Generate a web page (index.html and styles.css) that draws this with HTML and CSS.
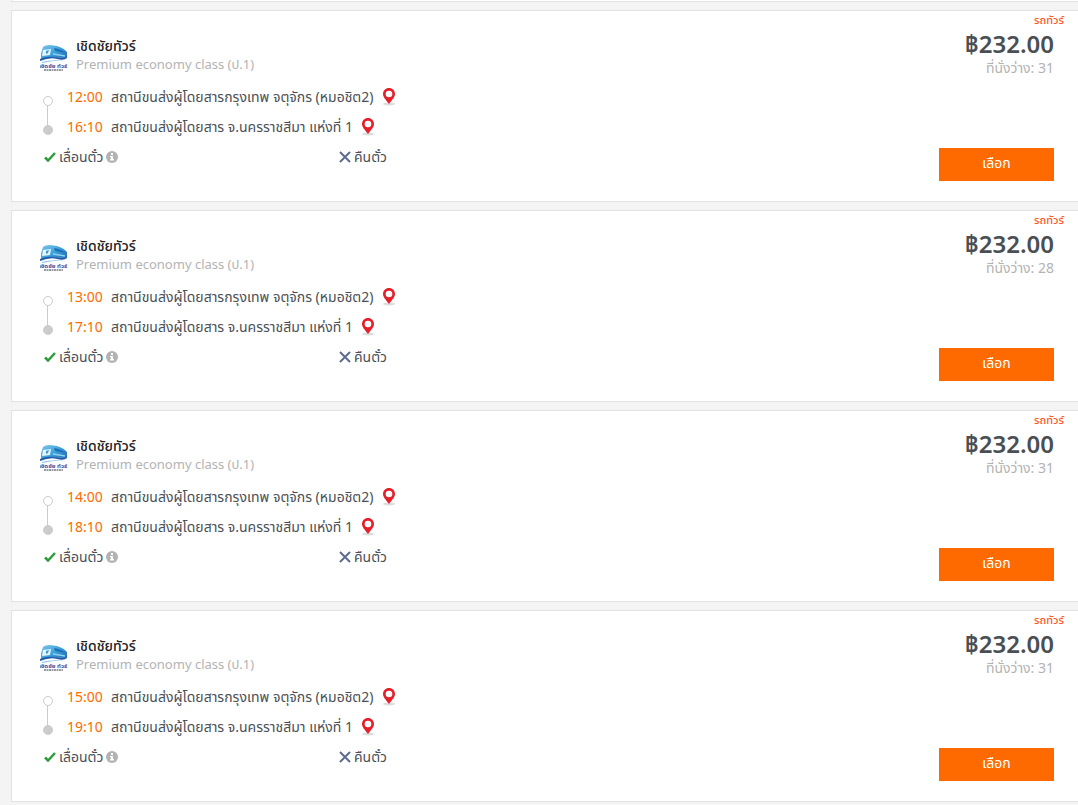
FILE: index.html
```html
<!DOCTYPE html>
<html lang="th">
<head>
<meta charset="utf-8">
<meta name="viewport" content="width=device-width, initial-scale=1">
<title>รถทัวร์</title>
<link rel="stylesheet" href="styles.css">
</head>
<body>
<svg class="defs" aria-hidden="true">
  <defs>
    <linearGradient id="busBlue" x1="0" y1="0" x2="1" y2="1">
      <stop offset="0" stop-color="#7cc6ea"/>
      <stop offset=".5" stop-color="#3fa3dc"/>
      <stop offset="1" stop-color="#1c62ad"/>
    </linearGradient>
    <symbol id="logo" viewBox="0 0 28 28">
      <path d="M3 2Q5 0 10 0L17 1Q24 3 27 7L27 13Q14 12 1 14L1 8z" fill="url(#busBlue)"/>
      <path d="M3 5L11 4L10 10L2 11z" fill="#e6f5fc"/>
      <path d="M6 6L9 5L8 8L6 9z" fill="#3f97d3"/>
      <path d="M14 3Q21 4 26 8L15 6z" fill="#1d6fb8"/>
      <path d="M13 9L25 11" stroke="#8fd2f0" stroke-width="1.500"/>
      <path d="M0 14Q7 11 13 12T27 13Q24 16 17 14T0 16z" fill="#2159a8"/>
      <path d="M2 17Q14 14 25 16Q14 15 2 18z" fill="#74bde6"/>
      <text x="13" y="23" text-anchor="middle" class="logo-name">เชิดชัย ทัวร์</text>
      <path d="M4 25H23" stroke="#77798c" stroke-width="1.4" stroke-dasharray="2 .5"/>
    </symbol>
    <symbol id="pin" viewBox="0 0 12 18">
      <ellipse cx="6" cy="16" rx="6" ry="1.5" fill="#dcdcdc"/>
      <path fill-rule="evenodd" d="M6 0C2.6 0 0 2.6 0 6C0 9 3 12 6 16C9 12 12 9 12 6C12 2.600 9.400 0 6 0zM6 2.700A3.300 3.300 0 1 1 6 9.300A3.300 3.300 0 1 1 6 2.700z" fill="#e5202b"/>
    </symbol>
    <symbol id="check" viewBox="0 0 12 10">
      <path d="M1 5.500L4 8.500L11 1" fill="none" stroke="#2a9d3c" stroke-width="2.500"/>
    </symbol>
    <symbol id="cross" viewBox="0 0 12 12">
      <path d="M1 1L11 11M11 1L1 11" fill="none" stroke="#5b6c8c" stroke-width="2"/>
    </symbol>
    <symbol id="info" viewBox="0 0 12 12">
      <circle cx="6" cy="6" r="6" fill="#b3b3b3"/>
      <path d="M5 2H7V4H5zM4 5H7V8H8V9.500H4V8H5V6.500H4z" fill="#fff"/>
    </symbol>
  </defs>
</svg>

<main class="trips">
  <div class="trip-end"></div>

  <article class="trip">
    <div class="info">
      <header class="operator">
        <svg class="logo" role="img" aria-label="เชิดชัยทัวร์"><use href="#logo"/></svg>
        <div>
          <h2>เชิดชัยทัวร์</h2>
          <p>Premium economy class (ป.1)</p>
        </div>
      </header>
      <ul class="route">
        <li><time>12:00</time><span>สถานีขนส่งผู้โดยสารกรุงเทพ จตุจักร (หมอชิต2)</span><svg class="pin"><use href="#pin"/></svg></li>
        <li><time>16:10</time><span>สถานีขนส่งผู้โดยสาร จ.นครราชสีมา แห่งที่ 1</span><svg class="pin"><use href="#pin"/></svg></li>
      </ul>
      <ul class="policy">
        <li><svg class="check"><use href="#check"/></svg><span>เลื่อนตั๋ว</span><svg class="tip"><use href="#info"/></svg></li>
        <li><svg class="cross"><use href="#cross"/></svg><span>คืนตั๋ว</span></li>
      </ul>
    </div>
    <div class="booking">
      <p class="type">รถทัวร์</p>
      <p class="price">฿232.00</p>
      <p class="seats">ที่นั่งว่าง: 31</p>
      <button type="button" class="select">เลือก</button>
    </div>
  </article>

  <article class="trip">
    <div class="info">
      <header class="operator">
        <svg class="logo" role="img" aria-label="เชิดชัยทัวร์"><use href="#logo"/></svg>
        <div>
          <h2>เชิดชัยทัวร์</h2>
          <p>Premium economy class (ป.1)</p>
        </div>
      </header>
      <ul class="route">
        <li><time>13:00</time><span>สถานีขนส่งผู้โดยสารกรุงเทพ จตุจักร (หมอชิต2)</span><svg class="pin"><use href="#pin"/></svg></li>
        <li><time>17:10</time><span>สถานีขนส่งผู้โดยสาร จ.นครราชสีมา แห่งที่ 1</span><svg class="pin"><use href="#pin"/></svg></li>
      </ul>
      <ul class="policy">
        <li><svg class="check"><use href="#check"/></svg><span>เลื่อนตั๋ว</span><svg class="tip"><use href="#info"/></svg></li>
        <li><svg class="cross"><use href="#cross"/></svg><span>คืนตั๋ว</span></li>
      </ul>
    </div>
    <div class="booking">
      <p class="type">รถทัวร์</p>
      <p class="price">฿232.00</p>
      <p class="seats">ที่นั่งว่าง: 28</p>
      <button type="button" class="select">เลือก</button>
    </div>
  </article>

  <article class="trip">
    <div class="info">
      <header class="operator">
        <svg class="logo" role="img" aria-label="เชิดชัยทัวร์"><use href="#logo"/></svg>
        <div>
          <h2>เชิดชัยทัวร์</h2>
          <p>Premium economy class (ป.1)</p>
        </div>
      </header>
      <ul class="route">
        <li><time>14:00</time><span>สถานีขนส่งผู้โดยสารกรุงเทพ จตุจักร (หมอชิต2)</span><svg class="pin"><use href="#pin"/></svg></li>
        <li><time>18:10</time><span>สถานีขนส่งผู้โดยสาร จ.นครราชสีมา แห่งที่ 1</span><svg class="pin"><use href="#pin"/></svg></li>
      </ul>
      <ul class="policy">
        <li><svg class="check"><use href="#check"/></svg><span>เลื่อนตั๋ว</span><svg class="tip"><use href="#info"/></svg></li>
        <li><svg class="cross"><use href="#cross"/></svg><span>คืนตั๋ว</span></li>
      </ul>
    </div>
    <div class="booking">
      <p class="type">รถทัวร์</p>
      <p class="price">฿232.00</p>
      <p class="seats">ที่นั่งว่าง: 31</p>
      <button type="button" class="select">เลือก</button>
    </div>
  </article>

  <article class="trip">
    <div class="info">
      <header class="operator">
        <svg class="logo" role="img" aria-label="เชิดชัยทัวร์"><use href="#logo"/></svg>
        <div>
          <h2>เชิดชัยทัวร์</h2>
          <p>Premium economy class (ป.1)</p>
        </div>
      </header>
      <ul class="route">
        <li><time>15:00</time><span>สถานีขนส่งผู้โดยสารกรุงเทพ จตุจักร (หมอชิต2)</span><svg class="pin"><use href="#pin"/></svg></li>
        <li><time>19:10</time><span>สถานีขนส่งผู้โดยสาร จ.นครราชสีมา แห่งที่ 1</span><svg class="pin"><use href="#pin"/></svg></li>
      </ul>
      <ul class="policy">
        <li><svg class="check"><use href="#check"/></svg><span>เลื่อนตั๋ว</span><svg class="tip"><use href="#info"/></svg></li>
        <li><svg class="cross"><use href="#cross"/></svg><span>คืนตั๋ว</span></li>
      </ul>
    </div>
    <div class="booking">
      <p class="type">รถทัวร์</p>
      <p class="price">฿232.00</p>
      <p class="seats">ที่นั่งว่าง: 31</p>
      <button type="button" class="select">เลือก</button>
    </div>
  </article>
</main>
</body>
</html>
```
FILE: styles.css
```css
*{ box-sizing:border-box;}
body{ margin:0; background:#f4f4f4; color:#4a4f55; font:14px/18px "Noto Sans","Noto Sans Thai",sans-serif;}
h2,p,ul{ margin:0; padding:0; list-style:none;}
svg{ flex:none;}
.defs{ position:absolute; width:0; height:0;}
.logo-name{ font-size:6px; font-weight:bold; fill:#3c4a9c;}

.trips{ padding-left:11px;}
.trip-end{ height:2px; background:#fff; border-bottom:1px solid #e2e2e5; border-left:1px solid #e2e2e5; margin-bottom:8px;}
.trip{ display:flex; justify-content:space-between; background:#fff; border:1px solid #e2e2e5; border-right:none; margin-bottom:8px;}

.info{ width:470px; padding:26px 0 29px 28px;}
.operator{ display:flex; align-items:flex-end; gap:8px; margin-bottom:9px;}
.operator h2{ font-size:14px; line-height:18px; font-weight:500; color:#222;}
.operator p{ font-size:13px; color:#b3b3b3;}
.logo{ width:28px; height:28px;}

.route{ position:relative;}
.route li{ display:flex; align-items:center; height:30px; padding-left:27px; white-space:nowrap;}
.route time{ width:44px; color:#ff6a00;}
.route:before{ content:''; position:absolute; left:7px; top:22px; width:1px; height:22px; background:#ccc;}
.route li:before{ content:''; position:absolute; left:3px; top:14px; width:8px; height:8px; border:1px solid #ccc; border-radius:50%; background:#fff;}
.route li + li:before{ top:43px; background:#ccc;}
.pin{ width:12px; height:18px; margin-left:9px;}

.policy{ display:grid; grid-template-columns:295px 1fr; padding-left:4px;}
.policy li{ display:flex; align-items:center; gap:3px; height:30px;}
.check{ width:12px; height:10px;}
.cross,.tip{ width:12px; height:12px;}

.booking{ display:flex; flex-direction:column; align-items:flex-end; padding:0 24px 20px 0;}
.type{ font-size:11px; line-height:18px; font-weight:500; color:#ff5a1f; margin-right:-10px;}
.price{ font-size:24px; line-height:30px; font-weight:600;}
.seats{ color:#b3b3b3;}
.select{ width:115px; height:33px; margin-top:auto; padding:0 0 4px; border:none; background:#ff6a00; color:#fff; font:inherit; cursor:pointer;}
```
